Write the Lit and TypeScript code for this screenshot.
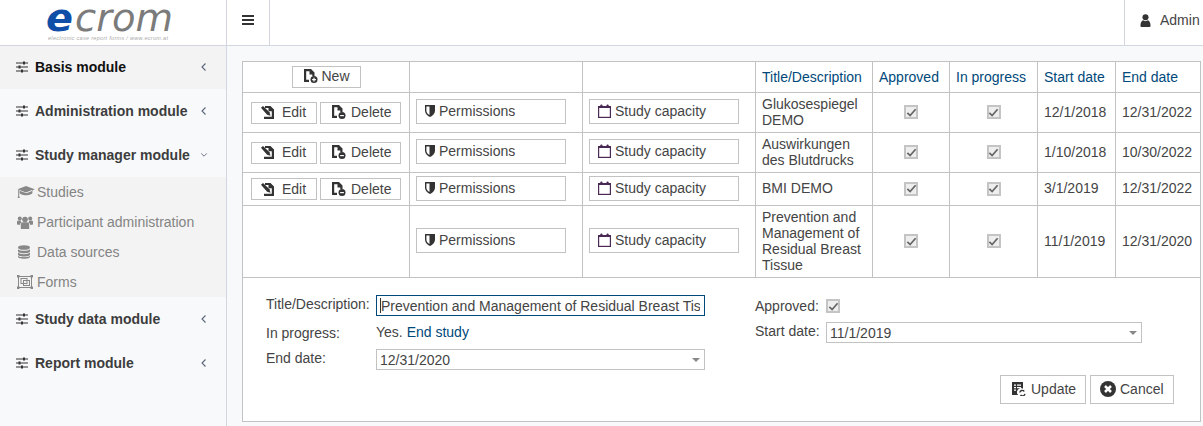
import { LitElement, html, css } from "lit";
import { customElement } from "lit/decorators.js";

const sliders = html`<svg class="ic-sl" viewBox="0 0 14 14" width="14" height="14" fill="none" stroke="currentColor"><path d="M1 3h12M1 7h12M1 11h12" stroke-width="1.100"/><path d="M8 1.600h2v2.800H8zM3.500 5.600h2v2.800h-2zM6 9.600h2v2.800H6z" fill="currentColor" stroke="none"/></svg>`;
const chevL = html`<svg viewBox="0 0 8 10" width="8" height="10" fill="none" stroke="currentColor" stroke-width="1.100"><path d="M5.500 1.500 2 5l3.500 3.500"/></svg>`;
const chevD = html`<svg viewBox="0 0 10 8" width="10" height="8" fill="none" stroke="currentColor" stroke-width="1.100"><path d="M1.500 2 5 5.500 8.500 2"/></svg>`;

const page = "M2 1h7l3.500 3.500v3.500h-2.200V6.500H7.500V3.200H4.200v8.600H7V14H2z";
const iNew = html`<svg class="i" viewBox="2 1 14 14" width="14" height="14"><path fill="#333" d=${page}/><circle cx="12" cy="11.500" r="3.500" fill="#333"/><path d="M10.100 11h1.300V9.700h1.200V11h1.300v1.200h-1.300v1.300h-1.200v-1.300h-1.300z" fill="#fff"/></svg>`;
const iDel = html`<svg class="i" viewBox="2 1 14 14" width="14" height="14"><path fill="#333" d=${page}/><circle cx="12" cy="11.500" r="3.500" fill="#333"/><path d="M10.100 11h3.800v1.200h-3.800z" fill="#fff"/></svg>`;
const iEdit = html`<svg class="i" viewBox="0 0 13 14" width="13" height="14"><path fill="#333" d="M4 1h5.500L13 4.500V14H3v-2.200h7.800V6.200H7.500V3H4z"/><path fill="#333" d="M0 2.800 2 1l6.500 6.300 1 3.400-3.400-1z"/></svg>`;
const iShield = html`<svg class="i" viewBox="1 1 10 12" width="10" height="12"><path fill="#333" d="M1 1h10v5.800c0 3-2.400 5-5 6.200-2.600-1.200-5-3.200-5-6.200z"/><path fill="#fff" d="M2.400 2.400h3.100v8.600C3.800 10 2.400 8.800 2.400 6.800z"/></svg>`;
const iCal = html`<svg class="i" viewBox="0 0 13 14" width="13" height="14" fill="none"><rect x=".6" y="2.600" width="11.800" height="10.800" stroke="#4a2a55" stroke-width="1.200"/><path d="M.6 2.600h11.800v1.400H.6z" fill="#4a2a55"/><rect x="2.400" y=".4" width="2" height="3.200" rx=".8" fill="#4a2a55"/><rect x="8.600" y=".4" width="2" height="3.200" rx=".8" fill="#4a2a55"/></svg>`;
const iUpdate = html`<svg class="i" viewBox="1 1 14 14" width="14" height="14"><path fill="#333" d="M1 1h11v6.700a4 4 0 0 0-4.800 6.300H1z"/><path fill="#fff" d="M3 3.500h2v1.200H3zM6 3.500h4v1.200H6zM3 6h2v1.200H3zM6 6h4v1.200H6zM3 8.500h2v1.200H3z"/><path fill="none" stroke="#333" stroke-width="1.300" d="M8.800 11.500a2.500 2.500 0 0 1 4.500-1M14 12.800a2.500 2.500 0 0 1-4.500 1"/></svg>`;
const iCancel = html`<svg class="i" viewBox="0 0 16 16" width="16" height="16"><circle cx="8" cy="8" r="8" fill="#333"/><path fill="none" stroke="#fff" stroke-width="2.500" d="M5 5l6 6M11 5l-6 6"/></svg>`;
const gCap = html`<svg viewBox="0 0 18 14" width="18" height="14" fill="#888"><path d="M9 1 0.500 4.200 9 7.400l6-2.300v.9l-5.600 2.200L2.600 5.800V8c0 .8 3 2.200 6.400 2.200s6.400-1.400 6.400-2.200V5.400l2.300-1.200z"/><path d="M1.200 5h1v6l.6 2H.6l.6-2z"/></svg>`;
const gUsers = html`<svg viewBox="0 0 16 14" width="16" height="14" fill="#888"><circle cx="8" cy="4.500" r="2.800"/><circle cx="2.800" cy="3.400" r="2"/><circle cx="13.200" cy="3.400" r="2"/><path d="M3.800 14V9.500C3.800 8 5 7.300 6 7.300h4c1 0 2.200.7 2.200 2.200V14z"/><path d="M0 9.500V7c0-1 .7-1.500 1.500-1.500h2c.3 1 .8 1.500 1.300 1.900-1.300.4-2 1.300-2 2.600zM16 9.500V7c0-1-.7-1.500-1.500-1.500h-2c-.3 1-.8 1.500-1.300 1.900 1.300.4 2 1.300 2 2.600z"/></svg>`;
const gDb = html`<svg viewBox="0 0 14 14" width="14" height="14" fill="#888"><ellipse cx="7" cy="2.500" rx="6" ry="2.300"/><path d="M1 4.200c1 1.200 3.500 1.600 6 1.600s5-.4 6-1.600v2c0 1.200-2.700 2-6 2s-6-.8-6-2zM1 7.600c1 1.200 3.500 1.600 6 1.600s5-.4 6-1.600v2c0 1.200-2.700 2-6 2s-6-.8-6-2zM1 10.800c1 1.200 3.500 1.400 6 1.400s5-.2 6-1.400v1c0 1.200-2.700 2-6 2s-6-.8-6-2z"/></svg>`;
const gObj = html`<svg viewBox="0 0 16 14" width="16" height="14" fill="none" stroke="#888" stroke-width="1"><rect x="1.500" y="1.500" width="13" height="11"/><rect x="4" y="3.500" width="6" height="5"/><rect x="6.500" y="5.500" width="6" height="5"/><g fill="#888" stroke="none"><rect x="0" y="0" width="2.500" height="2.500"/><rect x="13.500" y="0" width="2.500" height="2.500"/><rect x="0" y="11.500" width="2.500" height="2.500"/><rect x="13.500" y="11.500" width="2.500" height="2.500"/></g></svg>`;
const iBars = html`<svg viewBox="0 0 12 10" width="12" height="10" fill="#333"><rect y="0" width="12" height="2"/><rect y="4" width="12" height="2"/><rect y="8" width="12" height="2"/></svg>`;
const iUser = html`<svg viewBox="0 0 12 14" width="11" height="13" fill="#333"><circle cx="6" cy="3.500" r="3.300"/><path d="M0.500 13c0-3.500 1-5.500 2.800-6.200.8.600 1.700.9 2.700.9s1.900-.3 2.700-.9c1.800.7 2.800 2.700 2.800 6.200 0 .6-.5 1-1 1h-9c-.5 0-1-.4-1-1z"/></svg>`;
const check = html`<span class="cb"><svg viewBox="0 0 12 12" width="12" height="12" fill="none" stroke="#666" stroke-width="1.900"><path d="M1.500 6.300 4.500 9.300 10.500 2.500"/></svg></span>`;

const rows = [
  { title: "Glukosespiegel DEMO", s: "12/1/2018", e: "12/31/2022", edit: true, cls: "r2" },
  { title: "Auswirkungen des Blutdrucks", s: "1/10/2018", e: "10/30/2022", edit: true, cls: "r2" },
  { title: "BMI DEMO", s: "3/1/2019", e: "12/31/2022", edit: true, cls: "r1" },
  { title: "Prevention and Management of Residual Breast Tissue", s: "11/1/2019", e: "12/31/2020", edit: false, cls: "r4" },
];

@customElement("app-root")
export class AppRoot extends LitElement {
  static styles = css`
    :host { display: block; width: 1203px; height: 426px; overflow: hidden; font-family: "Liberation Sans", Arial, sans-serif; font-size: 14px; color: #444; background: #f8f9fb; }
    * { box-sizing: border-box; }
    .top { display: flex; height: 46px; background: #fff; border-bottom: 1px solid #d2d6de; }
    .logo { width: 227px; border-right: 1px solid #d2d6de; position: relative; }
    .logo svg { display: block; overflow: visible; }
    .burger { width: 43px; border-right: 1px solid #d2d6de; display: flex; align-items: center; justify-content: center; padding: 0 1px 5px 0; }
    .burger svg { display: block; }
    .spacer { flex: 1; }
    .user { width: 79px; border-left: 1px solid #d2d6de; display: flex; align-items: center; gap: 9px; padding: 0 0 5px 15px; color: #444; white-space: nowrap; }
    .body { display: flex; height: 380px; }
    .side { width: 227px; border-right: 1px solid #d2d6de; background: #f8f9fb; flex: none; }
    .mod { height: 44px; display: flex; align-items: center; padding: 0 0 0 15px; font-weight: bold; color: #3d3d3d; }
    .mod.active { background: #f3f3f3; color: #111; height: 43px; padding-bottom: 1px; }
    .mod .ic-sl { flex: none; color: #333; margin-right: 6px; }
    .mod .name { flex: 1; white-space: nowrap; }
    .mod .chev { width: 8px; margin-right: 18px; display: flex; justify-content: center; color: #5a6478; }
    .sub { background: #f3f3f3; }
    .sub div { height: 30px; display: flex; align-items: center; padding: 0 0 0 17px; color: #848484; white-space: nowrap; }
    .sub .gi { width: 20px; display: flex; }
    .main { flex: 1; padding: 15px 0 0 15px; background: #f8f9fb; }
    table { border-collapse: collapse; table-layout: fixed; width: 958px; background: #fff; }
    td, th { border: 1px solid #c2c2c2; font-weight: normal; padding: 0 6px 1px; line-height: 16px; text-align: left; }
    th { height: 31px; color: #00497a; }
    th.c { text-align: center; }
    tr.r2 td { height: 40px; } tr.r1 td { height: 33px; } tr.r4 td { height: 72px; }
    tr.r1 td.t { padding-bottom: 3px; }
    td.c { text-align: center; padding: 0; }
    td.k { text-align: center; padding: 0 0 3px; }
    td.w { padding: 0 0 2px 6px; }
    .btn { display: inline-flex; align-items: center; height: 22px; border: 1px solid #c2c2c2; background: #fff; color: #444; white-space: nowrap; vertical-align: middle; padding-bottom: 1px; }
    .i { display: block; flex: none; }
    .nb { width: 69px; padding-left: 11px; gap: 4px; }
    .eb { width: 66px; margin-right: 3px; padding-left: 9px; gap: 8px; }
    .db { width: 81px; padding-left: 11px; gap: 5px; }
    .wide { width: 150px; height: 25px; padding-left: 8px; gap: 4px; }
    .cb { display: inline-flex; align-items: center; justify-content: center; width: 14px; height: 14px; border: 2px solid #c4c4c4; background: #eee; vertical-align: middle; }
    .cb svg { width: 11px; height: 11px; flex: none; }
    .form { padding: 17px 26px 17px 23px; }
    .grid { display: grid; grid-template-columns: 110px 329px 50px 71px 316px; grid-auto-rows: 22px; row-gap: 5px; align-items: center; white-space: nowrap; }
    .lab { margin-top: -5px; }
    .lab.m { margin-top: -1px; }
    .val { margin-top: -2px; }
    .fld { height: 21px; align-self: start; border: 1px solid #c2c2c2; display: flex; align-items: center; padding-left: 3px; color: #444; background: #fff; position: relative; }
    .fld.focus { border-color: #00497a; padding: 0 4px 0 3px; }
    .clip { overflow: hidden; flex: 1; display: flex; align-items: center; white-space: nowrap; }
    .caret { width: 1px; height: 15px; background: #333; flex: none; }
    .fld .arrow { position: absolute; right: 4px; top: 8px; width: 0; height: 0; border-left: 4px solid transparent; border-right: 4px solid transparent; border-top: 4px solid #888; }
    .acts { display: flex; justify-content: flex-end; gap: 4px; margin-top: 4px; }
    .acts .btn { height: 29px; }
    .ub { width: 86px; padding-left: 11px; gap: 5px; }
    .cc { width: 84px; padding-left: 9px; gap: 4px; }
    .blue { color: #00497a; }
  `;

  render() {
    const mod = (name: string, open = false, active = false) => html`
      <div class="mod ${active ? "active" : ""}">${sliders}<span class="name">${name}</span><span class="chev">${open ? chevD : chevL}</span></div>`;
    return html`
      <div class="top">
        <div class="logo">
          <svg width="226" height="45" viewBox="0 0 226 45">
            <text x="46" y="31" font-family="DejaVu Sans" font-size="38" font-style="oblique" font-weight="bold" fill="#0f4fa8" textLength="27" lengthAdjust="spacingAndGlyphs">e</text>
            <text x="75" y="31" font-family="DejaVu Sans" font-size="38" font-style="oblique" fill="#7b7b7b" textLength="98" lengthAdjust="spacingAndGlyphs">crom</text>
            <text x="48" y="40" font-family="Liberation Sans" font-size="5.500" font-style="italic" fill="#aaa" textLength="120">electronic case report forms / www.ecrom.at</text>
          </svg>
        </div>
        <div class="burger">${iBars}</div>
        <div class="spacer"></div>
        <div class="user">${iUser}<span>Admin</span></div>
      </div>
      <div class="body">
        <nav class="side">
          ${mod("Basis module", false, true)}
          ${mod("Administration module")}
          ${mod("Study manager module", true)}
          <div class="sub">
            <div><span class="gi">${gCap}</span>Studies</div>
            <div><span class="gi">${gUsers}</span>Participant administration</div>
            <div><span class="gi">${gDb}</span>Data sources</div>
            <div><span class="gi">${gObj}</span>Forms</div>
          </div>
          ${mod("Study data module")}
          ${mod("Report module")}
        </nav>
        <main class="main">
          <table>
            <colgroup><col style="width:167px"/><col style="width:173px"/><col style="width:173px"/><col style="width:117px"/><col style="width:77px"/><col style="width:88px"/><col style="width:78px"/><col style="width:85px"/></colgroup>
            <tr>
              <th class="c"><span class="btn nb">${iNew}New</span></th>
              <th></th><th></th>
              <th>Title/Description</th><th>Approved</th><th>In progress</th><th>Start date</th><th>End date</th>
            </tr>
            ${rows.map(r => html`
              <tr class=${r.cls}>
                <td class="c">${r.edit ? html`<span class="btn eb">${iEdit}Edit</span><span class="btn db">${iDel}Delete</span>` : ""}</td>
                <td class="w"><span class="btn wide">${iShield}Permissions</span></td>
                <td class="w"><span class="btn wide">${iCal}Study capacity</span></td>
                <td class="t">${r.title}</td>
                <td class="k">${check}</td>
                <td class="k">${check}</td>
                <td class="t">${r.s}</td>
                <td class="t">${r.e}</td>
              </tr>`)}
            <tr>
              <td colspan="8" style="padding:0">
                <div class="form">
                  <div class="grid">
                    <span class="lab">Title/Description:</span>
                    <div class="fld focus"><div class="clip"><span class="caret"></span>Prevention and Management of Residual Breast Tissue</div></div>
                    <span></span>
                    <span class="lab m">Approved:</span>
                    <span class="val">${check}</span>
                    <span class="lab m">In progress:</span>
                    <span class="val">Yes. <span class="blue">End study</span></span>
                    <span></span>
                    <span class="lab">Start date:</span>
                    <div class="fld">11/1/2019<span class="arrow"></span></div>
                    <span class="lab">End date:</span>
                    <div class="fld">12/31/2020<span class="arrow"></span></div>
                  </div>
                  <div class="acts">
                    <span class="btn ub">${iUpdate}Update</span>
                    <span class="btn cc">${iCancel}Cancel</span>
                  </div>
                </div>
              </td>
            </tr>
          </table>
        </main>
      </div>`;
  }
}
